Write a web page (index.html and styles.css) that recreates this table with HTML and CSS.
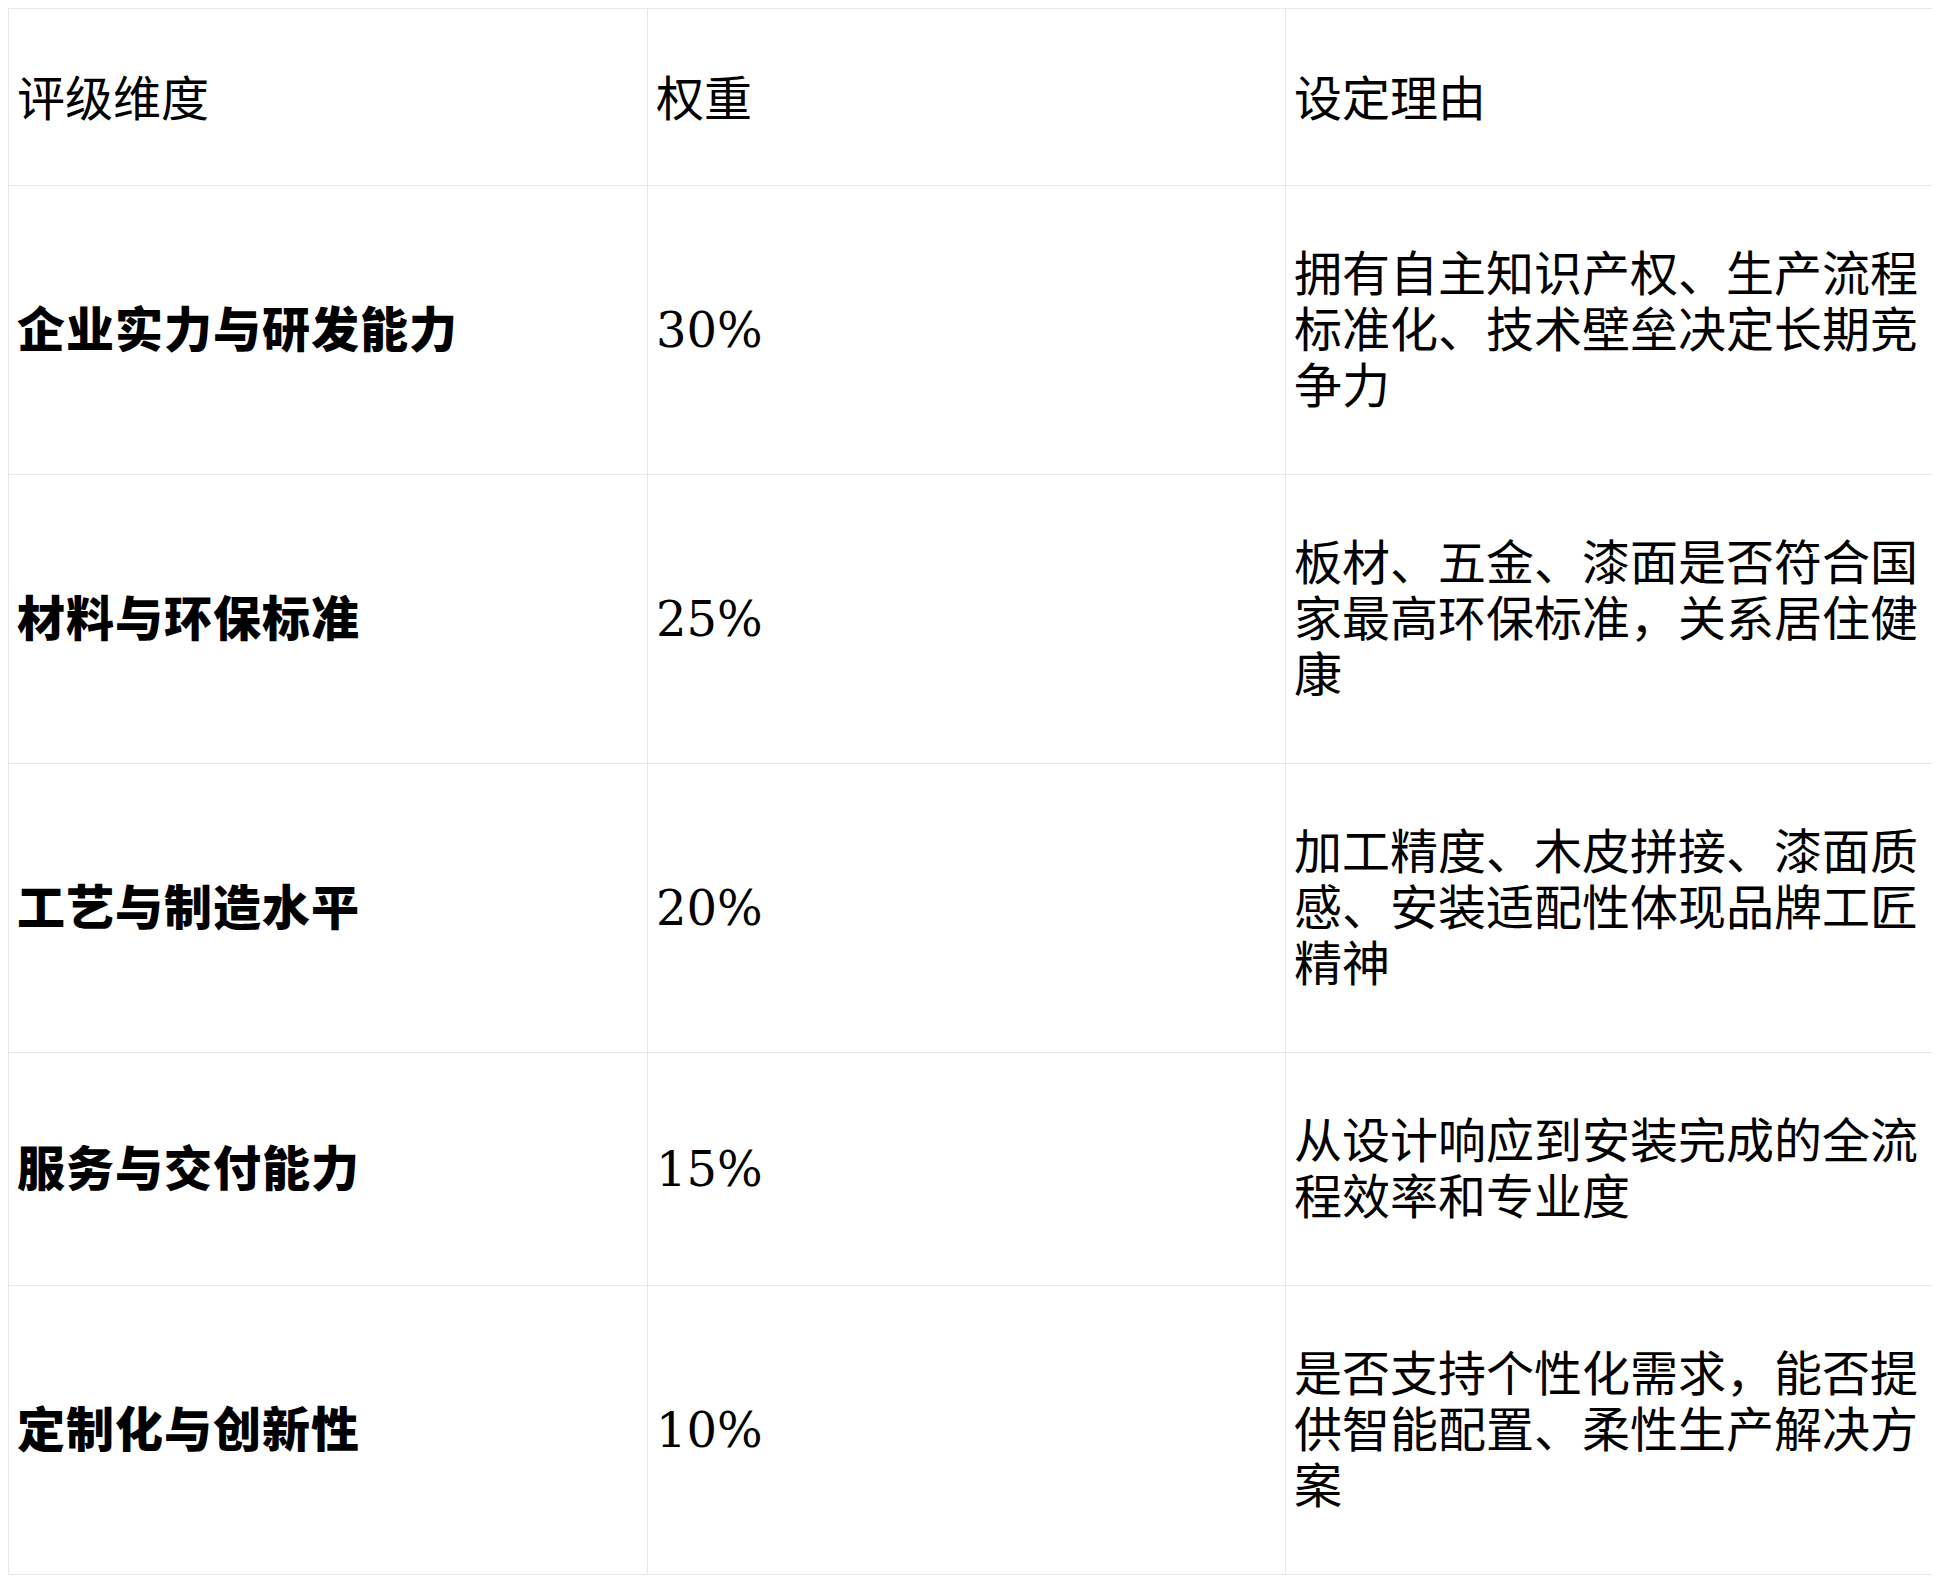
FILE: index.html
```html
<!DOCTYPE html>
<html lang="zh-CN">
<head>
<meta charset="utf-8">
<title>评级维度</title>
<link rel="stylesheet" href="styles.css">
</head>
<body>
<table class="rating-table">
  <colgroup>
    <col class="col-dim">
    <col class="col-weight">
    <col class="col-reason">
  </colgroup>
  <thead>
    <tr>
      <th>评级维度</th>
      <th>权重</th>
      <th>设定理由</th>
    </tr>
  </thead>
  <tbody>
    <tr>
      <td class="dim">企业实力与研发能力</td>
      <td>30%</td>
      <td>拥有自主知识产权、生产流程标准化、技术壁垒决定长期竞争力</td>
    </tr>
    <tr>
      <td class="dim">材料与环保标准</td>
      <td>25%</td>
      <td>板材、五金、漆面是否符合国家最高环保标准，关系居住健康</td>
    </tr>
    <tr>
      <td class="dim">工艺与制造水平</td>
      <td>20%</td>
      <td>加工精度、木皮拼接、漆面质感、安装适配性体现品牌工匠精神</td>
    </tr>
    <tr>
      <td class="dim">服务与交付能力</td>
      <td>15%</td>
      <td>从设计响应到安装完成的全流程效率和专业度</td>
    </tr>
    <tr>
      <td class="dim">定制化与创新性</td>
      <td>10%</td>
      <td>是否支持个性化需求，能否提供智能配置、柔性生产解决方案</td>
    </tr>
  </tbody>
</table>
</body>
</html>
```
FILE: styles.css
```css
html, body {
  background: #ffffff;
}
body {
  margin: 8px;
  font-family: "DejaVu Serif", "Noto Sans CJK SC", serif;
  color: #000000;
}
.rating-table {
  width: 100%;
  border-collapse: collapse;
  table-layout: fixed;
  font-size: 48px;
  line-height: 56px;
}
.col-dim { width: 639px; }
.col-weight { width: 638px; }
.col-reason { width: 647px; }
.rating-table th,
.rating-table td {
  border: 1px solid #e5e7eb;
  padding: 60px 8px;
  text-align: left;
  vertical-align: middle;
  font-weight: normal;
}
.rating-table th {
  padding-top: 62px;
  padding-bottom: 58px;
}
.rating-table td.dim {
  font-weight: 900;
  letter-spacing: 1px;
}
```
